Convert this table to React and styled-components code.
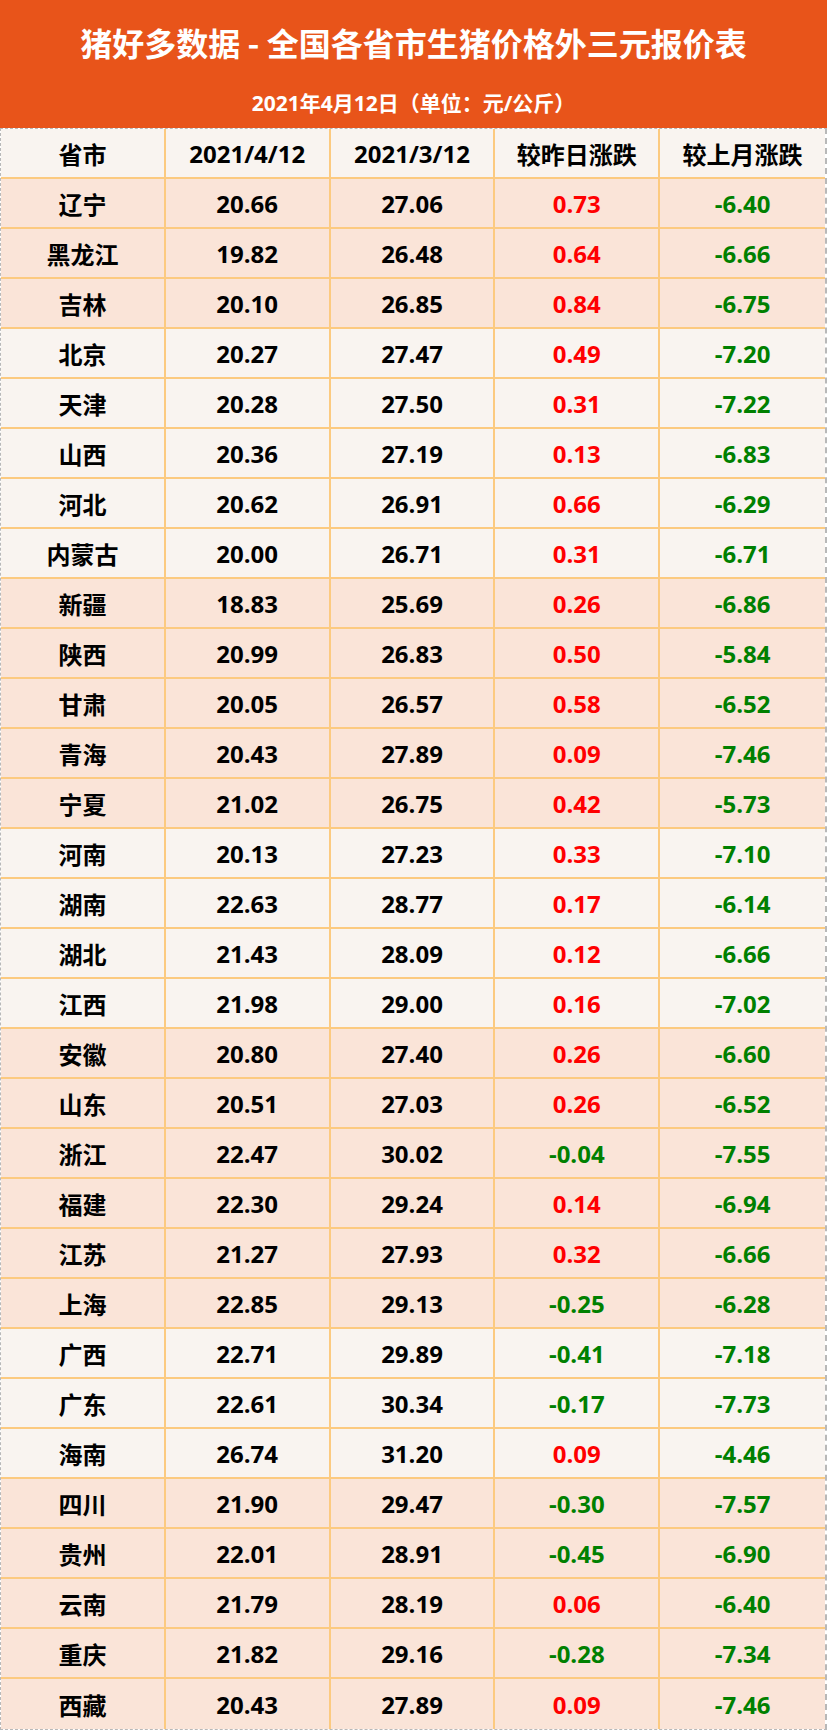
import React from "react";
import styled, { createGlobalStyle } from "styled-components";

const GlobalStyle = createGlobalStyle`
  html, body {
    margin: 0;
    padding: 0;
    background: #ffffff;
  }
  body {
    font-family: "Open Sans", "Noto Sans CJK SC", sans-serif;
  }
`;

const Page = styled.div`
  width: 827px;
  display: flex;
  flex-direction: column;
`;

const Banner = styled.div`
  height: 128px;
  background-color: #e8541a;
  color: white;
  display: flex;
  flex-direction: column;
  align-items: center;
  font-weight: 700;
  box-sizing: border-box;
  padding-top: 22px;
`;

const Title = styled.div`
  font-size: 32px;
  line-height: 40px;
  font-family: "Noto Sans CJK SC", sans-serif;
`;

const Subtitle = styled.div`
  margin-top: 26px;
  font-size: 21px;
  line-height: 30px;
  font-family: "Open Sans", "Noto Sans CJK SC", sans-serif;
`;

const Table = styled.div`
  border-top: 1px dashed #b8b8b8;
  border-bottom: 1px dashed #b8b8b8;
  border-left: 1px dashed #b8b8b8;
  border-right: 2px dashed #b8b8b8;
  display: flex;
  flex-direction: column;
`;

const Row = styled.div`
  display: grid;
  grid-template-columns: repeat(5, 1fr);
  height: 50px;
  box-sizing: border-box;
  background-color: ${(p) => (p.$shade ? "#fae4d8" : "#f9f4f0")};
  border-bottom: ${(p) => (p.$last ? "none" : "2px solid #fcca80")};
`;

const Cell = styled.div`
  display: flex;
  align-items: center;
  justify-content: center;
  font-size: 24px;
  font-weight: 700;
  color: ${(p) => p.$color || "#000000"};
  border-right: ${(p) => (p.$end ? "none" : "2px solid #fcca80")};
`;

const regions = [
  [
    ["辽宁", 20.66, 27.06, 0.73, -6.4],
    ["黑龙江", 19.82, 26.48, 0.64, -6.66],
    ["吉林", 20.1, 26.85, 0.84, -6.75],
  ],
  [
    ["北京", 20.27, 27.47, 0.49, -7.2],
    ["天津", 20.28, 27.5, 0.31, -7.22],
    ["山西", 20.36, 27.19, 0.13, -6.83],
    ["河北", 20.62, 26.91, 0.66, -6.29],
    ["内蒙古", 20.0, 26.71, 0.31, -6.71],
  ],
  [
    ["新疆", 18.83, 25.69, 0.26, -6.86],
    ["陕西", 20.99, 26.83, 0.5, -5.84],
    ["甘肃", 20.05, 26.57, 0.58, -6.52],
    ["青海", 20.43, 27.89, 0.09, -7.46],
    ["宁夏", 21.02, 26.75, 0.42, -5.73],
  ],
  [
    ["河南", 20.13, 27.23, 0.33, -7.1],
    ["湖南", 22.63, 28.77, 0.17, -6.14],
    ["湖北", 21.43, 28.09, 0.12, -6.66],
    ["江西", 21.98, 29.0, 0.16, -7.02],
  ],
  [
    ["安徽", 20.8, 27.4, 0.26, -6.6],
    ["山东", 20.51, 27.03, 0.26, -6.52],
    ["浙江", 22.47, 30.02, -0.04, -7.55],
    ["福建", 22.3, 29.24, 0.14, -6.94],
    ["江苏", 21.27, 27.93, 0.32, -6.66],
    ["上海", 22.85, 29.13, -0.25, -6.28],
  ],
  [
    ["广西", 22.71, 29.89, -0.41, -7.18],
    ["广东", 22.61, 30.34, -0.17, -7.73],
    ["海南", 26.74, 31.2, 0.09, -4.46],
  ],
  [
    ["四川", 21.9, 29.47, -0.3, -7.57],
    ["贵州", 22.01, 28.91, -0.45, -6.9],
    ["云南", 21.79, 28.19, 0.06, -6.4],
    ["重庆", 21.82, 29.16, -0.28, -7.34],
    ["西藏", 20.43, 27.89, 0.09, -7.46],
  ],
];

// every other region group gets the peach shade
const rows = regions.flatMap((group, gi) =>
  group.map((r) => ({ data: r, shade: gi % 2 === 0 }))
);

const changeColor = (v) => (v < 0 ? "#008000" : "#ff0000");

export default function App() {
  return (
    <Page>
      <GlobalStyle />
      <Banner>
        <Title>猪好多数据 - 全国各省市生猪价格外三元报价表</Title>
        <Subtitle>2021年4月12日（单位：元/公斤）</Subtitle>
      </Banner>
      <Table>
        <Row>
          <Cell>省市</Cell>
          <Cell>2021/4/12</Cell>
          <Cell>2021/3/12</Cell>
          <Cell>较昨日涨跌</Cell>
          <Cell $end>较上月涨跌</Cell>
        </Row>
        {rows.map(({ data, shade }, i) => {
          const [name, now, before, day, month] = data;
          return (
            <Row key={name} $shade={shade} $last={i === rows.length - 1}>
              <Cell>{name}</Cell>
              <Cell>{now.toFixed(2)}</Cell>
              <Cell>{before.toFixed(2)}</Cell>
              <Cell $color={changeColor(day)}>{day.toFixed(2)}</Cell>
              <Cell $end $color={changeColor(month)}>
                {month.toFixed(2)}
              </Cell>
            </Row>
          );
        })}
      </Table>
    </Page>
  );
}
